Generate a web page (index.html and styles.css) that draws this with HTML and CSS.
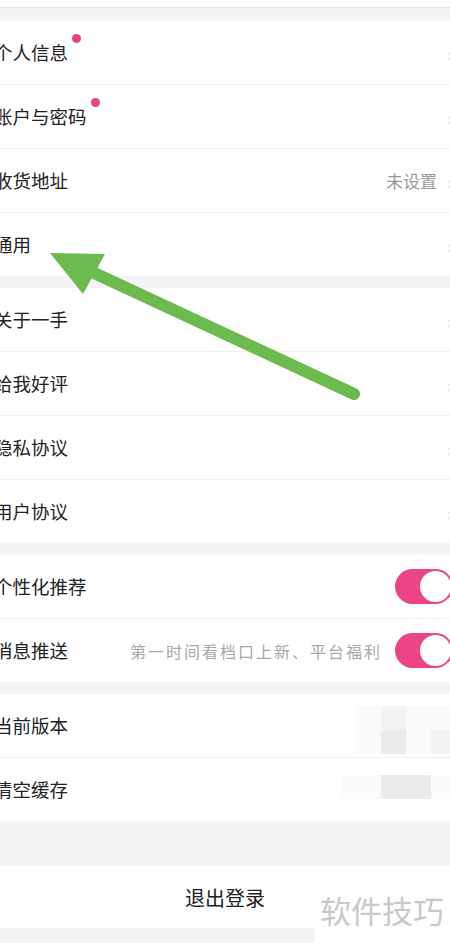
FILE: index.html
```html
<!DOCTYPE html>
<html lang="zh-CN">
<head>
<meta charset="utf-8">
<title>设置</title>
<link rel="stylesheet" href="styles.css">
</head>
<body>
<div class="page">
  <div class="topbar"></div>

  <section class="group g1">
    <div class="row"><span class="label">个人信息<i class="dot"></i></span><span class="chev">›</span></div>
    <div class="row"><span class="label">账户与密码<i class="dot"></i></span><span class="chev">›</span></div>
    <div class="row"><span class="label">收货地址</span><span class="value">未设置</span><span class="chev">›</span></div>
    <div class="row"><span class="label">通用</span><span class="chev">›</span></div>
  </section>

  <section class="group">
    <div class="row"><span class="label">关于一手</span><span class="chev">›</span></div>
    <div class="row"><span class="label">给我好评</span><span class="chev">›</span></div>
    <div class="row"><span class="label">隐私协议</span><span class="chev">›</span></div>
    <div class="row"><span class="label">用户协议</span><span class="chev">›</span></div>
  </section>

  <section class="group">
    <div class="row"><span class="label">个性化推荐</span><span class="toggle"><i class="knob"></i></span></div>
    <div class="row"><span class="label">消息推送</span><span class="sub">第一时间看档口上新、平台福利</span><span class="toggle"><i class="knob"></i></span></div>
  </section>

  <section class="group">
    <div class="row"><span class="label">当前版本</span>
      <span class="mosaic m1"><i class="c a"></i><i class="c b"></i><i class="c a"></i><i class="c a"></i><i class="c a"></i><i class="c d"></i><i class="c a"></i><i class="c b"></i></span>
    </div>
    <div class="row"><span class="label">清空缓存</span>
      <span class="mosaic m2"><i class="c a"></i><i class="c d"></i><i class="c d"></i><i class="c a"></i></span>
    </div>
  </section>

  <div class="logout">退出登录</div>
</div>

<svg class="arrow" width="450" height="943" viewBox="0 0 450 943" aria-hidden="true">
  <line x1="92" y1="272" x2="354" y2="394" stroke="#6dbb4e" stroke-width="12" stroke-linecap="round"/>
  <polygon points="50,253 105,254 83,294" fill="#6dbb4e"/>
</svg>

<div class="watermark">软件技巧</div>
</body>
</html>
```

FILE: styles.css
```css
html, body {
  margin: 0;
  padding: 0;
}
body {
  background: #f5f5f7;
  width: 450px;
  height: 943px;
  overflow: hidden;
  position: relative;
  font-family: "Noto Sans CJK SC", "Noto Sans", sans-serif;
  color: #222;
}
.page {
  margin: 0 -12px 0 -6px;
}
.topbar {
  height: 7px;
  background: #fbfbfb;
  border-bottom: 1px solid #e6e6e8;
}
.group {
  background: #fff;
  margin-top: 12px;
}
.g1 {
  margin-top: 13px;
}
.row {
  height: 63px;
  display: flex;
  align-items: center;
  padding-right: 9px;
  box-sizing: content-box;
}
.row + .row {
  border-top: 1px solid #efeff1;
}
.label {
  font-size: 18.5px;
  position: relative;
  line-height: 1;
  flex: 0 0 auto;
  margin-top: -1px;
}
.dot {
  position: absolute;
  right: -13px;
  top: -9px;
  width: 9px;
  height: 9px;
  border-radius: 50%;
  background: #e8437a;
}
.value {
  margin-left: auto;
  margin-right: 8px;
  font-size: 17px;
  color: #9a9a9a;
}
.chev {
  margin-left: auto;
  width: 8px;
  font-size: 22px;
  line-height: 1;
  color: #ececec;
  text-align: right;
}
.value + .chev {
  margin-left: 0;
}
.sub {
  margin-left: auto;
  margin-right: 13px;
  font-size: 16px;
  letter-spacing: 2px;
  color: #a8a8a8;
}
.toggle {
  margin-left: auto;
  width: 58px;
  height: 35px;
  border-radius: 18px;
  background: #ea4585;
  display: flex;
  align-items: center;
  justify-content: flex-end;
  padding-right: 2px;
  box-sizing: border-box;
}
.sub + .toggle {
  margin-left: 0;
}
.knob {
  width: 31px;
  height: 31px;
  border-radius: 50%;
  background: #fff;
}
.mosaic {
  margin-left: auto;
  display: grid;
  grid-template-columns: repeat(4, 25px);
  margin-right: -3px;
}
.m1 {
  grid-auto-rows: 24px;
  margin-top: 8px;
}
.m2 {
  grid-template-columns: 40px 25px 25px 25px;
  grid-auto-rows: 24px;
  margin-top: -6px;
}
.c { display: block; }
.c.a { background: #fafafa; }
.c.b { background: #f3f3f3; }
.c.d { background: #ebebeb; }
.logout {
  margin-top: 45px;
  height: 62px;
  background: #fff;
  display: flex;
  align-items: center;
  justify-content: center;
  font-size: 20px;
  color: #222;
  padding-right: 6px;
}
.arrow {
  position: absolute;
  left: 0;
  top: 0;
  pointer-events: none;
}
.watermark {
  position: absolute;
  left: 315px;
  top: 880px;
  width: 135px;
  height: 63px;
  background: #fff;
  color: #c9c9c9;
  font-size: 31px;
  line-height: 1;
  padding: 14px 0 0 5px;
  box-sizing: border-box;
  white-space: nowrap;
}
```
